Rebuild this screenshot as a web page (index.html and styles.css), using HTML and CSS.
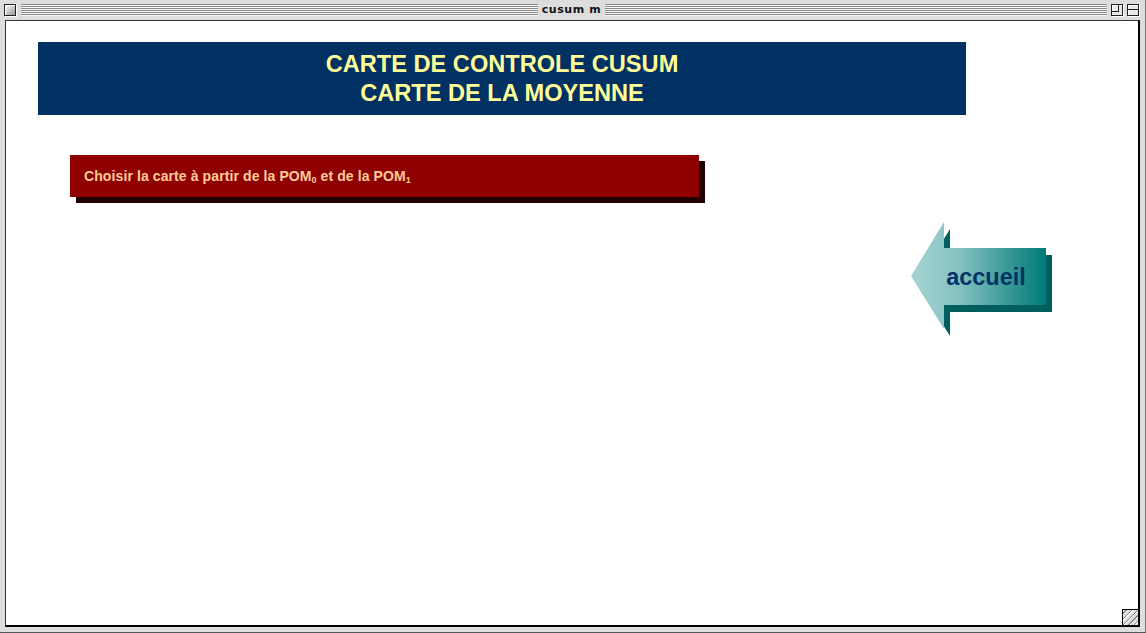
FILE: index.html
```html
<!DOCTYPE html>
<html lang="fr">
<head>
<meta charset="utf-8">
<title>cusum m</title>
<link rel="stylesheet" href="styles.css">
</head>
<body>
<div class="window">
  <div class="titlebar">
    <span class="wbox close"></span>
    <div class="stripes left"></div>
    <span class="wtitle">cusum m</span>
    <div class="stripes right"></div>
    <span class="wbox zoombox"><span class="zin"></span></span>
    <span class="wbox collapse"><span class="cline"></span></span>
  </div>
  <div class="content">
    <div class="banner">
      <div>CARTE DE CONTROLE CUSUM</div>
      <div>CARTE DE LA MOYENNE</div>
    </div>
    <div class="row">
      <div class="redbtn">Choisir la carte à partir de la POM<sub>0</sub> et de la POM<sub>1</sub></div>
      <svg class="arrow" width="142" height="116" viewBox="0 0 142 116">
        <defs>
          <linearGradient id="ag" x1="0" y1="0" x2="1" y2="0">
            <stop offset="0" stop-color="#a6d4d4"/>
            <stop offset="0.35" stop-color="#86c2c2"/>
            <stop offset="1" stop-color="#007a76"/>
          </linearGradient>
        </defs>
        <polygon points="6,62 39,8 39,34 141,34 141,91 39,91 39,115" fill="#005f5c"/>
        <polygon points="0,55 33,1 33,27 135,27 135,84 33,84 33,108" fill="url(#ag)"/>
        <text x="75" y="64" text-anchor="middle" class="atext">accueil</text>
      </svg>
    </div>
    <div class="grow"></div>
  </div>
</div>
</body>
</html>
```
FILE: styles.css
```css
html, body {
  margin: 0;
  padding: 0;
  background: #dddddd;
}
.window {
  width: 1146px;
  height: 633px;
  box-sizing: border-box;
  background: #dddddd;
  display: flex;
  flex-direction: column;
  padding: 0 5px 5px 5px;
  border-bottom: 1px solid #555;
  border-right: 1px solid #777;
}
.titlebar {
  height: 20px;
  margin: 0 -5px;
  padding: 0 6px 0 4px;
  display: flex;
  align-items: center;
  box-sizing: border-box;
}
.wbox {
  width: 10px;
  height: 10px;
  border: 1px solid #222;
  background: linear-gradient(135deg, #fff 0%, #ccc 50%, #999 100%);
  box-shadow: inset 1px 1px 0 #fff, 1px 1px 0 #fff;
  position: relative;
  flex: none;
}
.close { margin-right: 5px; }
.zoombox { margin-left: 4px; margin-right: 4px; background: #e8e8e8; }
.collapse { background: #e8e8e8; }
.zin {
  position: absolute;
  left: 0;
  top: 0;
  width: 6px;
  height: 6px;
  border-right: 1px solid #222;
  border-bottom: 1px solid #222;
}
.cline {
  position: absolute;
  left: 0;
  right: 0;
  top: 4px;
  height: 1px;
  border-top: 1px solid #222;
}
.stripes {
  height: 12px;
  flex-basis: 0;
  background: repeating-linear-gradient(to bottom, #8a8a8a 0 1px, #f6f6f6 1px 2px);
}
.stripes.left { flex-grow: 517; }
.stripes.right { flex-grow: 502; }
.wtitle {
  flex: none;
  width: 67px;
  text-align: center;
  font-family: "DejaVu Sans", "Liberation Sans", sans-serif;
  font-weight: bold;
  font-size: 11px;
  letter-spacing: 0.6px;
  color: #111;
  line-height: 14px;
}
.content {
  flex: 1;
  background: #ffffff;
  border-left: 1px solid #333;
  border-top: 1px solid #333;
  border-right: 2px solid #000;
  border-bottom: 2px solid #000;
  position: relative;
  box-sizing: border-box;
}
.banner {
  margin: 21px 0 0 32px;
  width: 928px;
  height: 73px;
  box-sizing: border-box;
  padding-top: 8px;
  background: #003162;
  color: #ffff99;
  font-family: "Liberation Sans", Arial, sans-serif;
  font-weight: bold;
  font-size: 23.6px;
  line-height: 29px;
  text-align: center;
}
.row {
  display: flex;
  align-items: flex-start;
  margin-top: 40px;
}
.redbtn {
  margin-left: 64px;
  width: 629px;
  height: 42px;
  box-sizing: border-box;
  padding-left: 14px;
  background: #8f0000;
  box-shadow: 6px 6px 0 #220000;
  color: #ffcc99;
  font-family: "Liberation Sans", Arial, sans-serif;
  font-weight: bold;
  font-size: 14px;
  letter-spacing: 0.1px;
  line-height: 42px;
  white-space: nowrap;
}
.redbtn sub {
  font-size: 9px;
  vertical-align: -2px;
  letter-spacing: 0;
}
.arrow {
  margin-left: auto;
  margin-right: 85px;
  margin-top: 66px;
  display: block;
}
.atext {
  font-family: "Liberation Sans", Arial, sans-serif;
  font-weight: bold;
  font-size: 23.5px;
  fill: #003366;
}
.grow {
  position: absolute;
  right: 0;
  bottom: 0;
  width: 15px;
  height: 15px;
  border-left: 1px solid #000;
  border-top: 1px solid #000;
  background: #dddddd repeating-linear-gradient(135deg, #dddddd 0 2px, #888 2px 3px, #fff 3px 4px);
}
```
